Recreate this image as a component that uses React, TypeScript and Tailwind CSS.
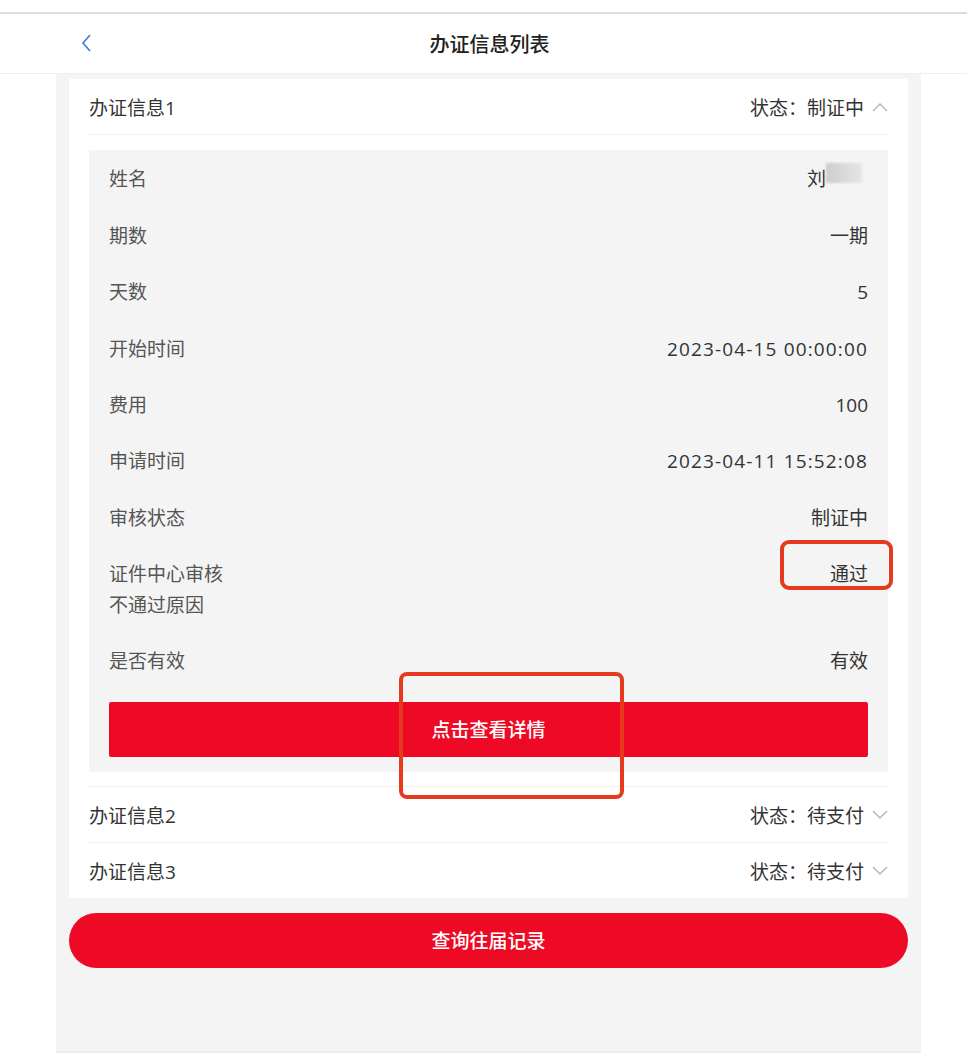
import React from "react";

type Row = { label: string[]; value: React.ReactNode };

const font = { fontFamily: '"Open Sans", "Noto Sans CJK SC", sans-serif' };

function Chevron({ up }: { up?: boolean }) {
  return (
    <svg width="16" height="10" viewBox="0 0 16 10" className="ml-[8px] -mt-[2px]">
      <polyline
        points={up ? "1,9 8,2 15,9" : "1,1 8,8 15,1"}
        fill="none"
        stroke="#b5b5b5"
        strokeWidth="1.4"
      />
    </svg>
  );
}

function CardHeader({ title, status, open }: { title: string; status: string; open?: boolean }) {
  return (
    <div className="flex h-[55px] items-center justify-between pt-[3px] text-[19px] text-[#333]">
      <span>{title}</span>
      <span className="flex items-center">
        状态：{status}
        <Chevron up={open} />
      </span>
    </div>
  );
}

export default function App() {
  const date = (s: string) => <span className="tracking-[1.15px]">{s}</span>;
  const rows: Row[] = [
    {
      label: ["姓名"],
      value: (
        <span className="mr-[6px] flex items-center">
          刘
          <span className="-mt-[14px] inline-block h-[20px] w-[36px] bg-gradient-to-r from-[#cdcdcd] to-[#e6e6e6] blur-[1px]" />
        </span>
      ),
    },
    { label: ["期数"], value: "一期" },
    { label: ["天数"], value: "5" },
    { label: ["开始时间"], value: date("2023-04-15 00:00:00") },
    { label: ["费用"], value: "100" },
    { label: ["申请时间"], value: date("2023-04-11 15:52:08") },
    { label: ["审核状态"], value: "制证中" },
    { label: ["证件中心审核", "不通过原因"], value: "通过" },
    { label: ["是否有效"], value: "有效" },
  ];

  return (
    <div className="relative flex h-[1053px] w-full flex-col bg-white" style={font}>
      <div className="h-[14px] shrink-0 border-b-2 border-[#dcdcdc]" />
      <div className="relative flex h-[60px] shrink-0 items-center justify-center border-b border-[#efefef] pt-[2px]">
        <svg width="12" height="18" viewBox="0 0 12 18" className="absolute left-[81px] top-[20px]">
          <polyline points="9,1 2,9 9,17" fill="none" stroke="#3a7fd6" strokeWidth="1.6" />
        </svg>
        <span className="ml-[12px] text-[20px] font-medium text-[#222]">办证信息列表</span>
      </div>

      <div className="ml-[56px] w-[865px] flex-1 border-b-2 border-[#ececec] bg-[#f4f4f4] px-[13px] pt-[5px]">
        <div className="bg-white px-[20px]">
          <CardHeader title="办证信息1" status="制证中" open />
          <div className="border-t border-[#f0f0f0] pt-[15px] pb-[14px]">
            <div className="bg-[#f4f4f4] px-[20px] pb-[15px]">
              {rows.map((r, i) =>
                r.label.length > 1 ? (
                  <div key={i} className="flex h-[87px] justify-between pt-[14px] text-[19px]">
                    <div className="flex flex-col leading-[31px] text-[#555]">
                      {r.label.map((l) => (
                        <span key={l}>{l}</span>
                      ))}
                    </div>
                    <span className="leading-[31px] text-[#333]">{r.value}</span>
                  </div>
                ) : (
                  <div key={i} className="flex h-[56.4px] items-center justify-between pt-[3px] text-[19px]">
                    <span className="text-[#555]">{r.label[0]}</span>
                    <span className="text-[#333]">{r.value}</span>
                  </div>
                )
              )}
              <button className="mt-[14px] flex h-[55px] w-full items-center justify-center rounded-[2px] bg-[#ee0a24] pt-[2px] text-[19px] font-medium text-white">
                点击查看详情
              </button>
            </div>
          </div>
          <div className="border-t border-[#f0f0f0]">
            <CardHeader title="办证信息2" status="待支付" />
          </div>
          <div className="border-t border-[#f0f0f0]">
            <CardHeader title="办证信息3" status="待支付" />
          </div>
        </div>

        <button className="mt-[15px] flex h-[55px] w-full items-center justify-center rounded-full bg-[#ee0a24] pt-[2px] text-[19px] font-medium text-white">
          查询往届记录
        </button>
      </div>

      <div className="pointer-events-none absolute left-[780px] top-[540px] h-[50px] w-[113px] rounded-[9px] border-[4px] border-[#e63a1f]" />
      <div className="pointer-events-none absolute left-[399px] top-[672px] h-[127px] w-[225px] rounded-[8px] border-[4px] border-[#e63a1f]" />
    </div>
  );
}
